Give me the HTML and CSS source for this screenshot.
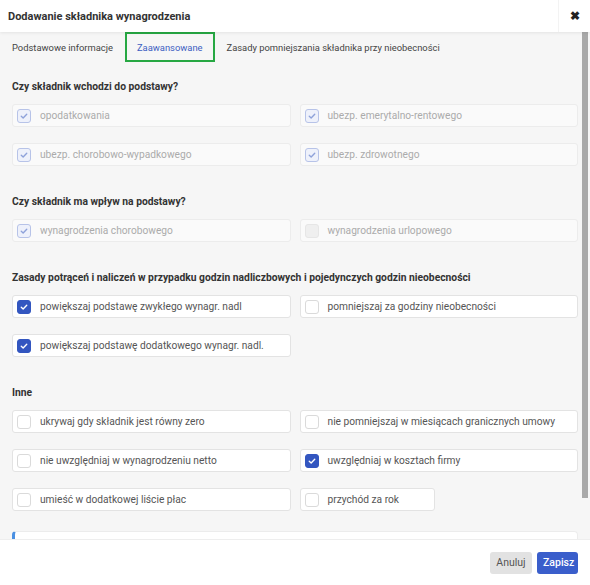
FILE: index.html
```html
<!DOCTYPE html>
<html lang="pl">
<head>
<meta charset="utf-8">
<title>Dodawanie składnika wynagrodzenia</title>
<link rel="stylesheet" href="styles.css">
</head>
<body>
<div class="dialog">
  <header class="dlg-header">
    <h1 class="dlg-title">Dodawanie składnika wynagrodzenia</h1>
    <button class="dlg-close" aria-label="Zamknij">&#10006;</button>
  </header>

  <div class="dlg-viewport">
  <main class="dlg-body">
    <nav class="tabs">
      <span class="tab">Podstawowe informacje</span>
      <span class="tab tab-active">Zaawansowane</span>
      <span class="tab">Zasady pomniejszania składnika przy nieobecności</span>
    </nav>

    <section class="section">
      <h2 class="section-title">Czy składnik wchodzi do podstawy?</h2>
      <div class="grid">
        <label class="opt opt-disabled"><span class="cb cb-dis-on"><svg viewBox="0 0 14 14"><path d="M3.8 7.3 L6 9.3 L10.2 4.9"/></svg></span><span class="opt-text">opodatkowania</span></label>
        <label class="opt opt-disabled"><span class="cb cb-dis-on"><svg viewBox="0 0 14 14"><path d="M3.8 7.3 L6 9.3 L10.2 4.9"/></svg></span><span class="opt-text">ubezp. emerytalno-rentowego</span></label>
        <label class="opt opt-disabled"><span class="cb cb-dis-on"><svg viewBox="0 0 14 14"><path d="M3.8 7.3 L6 9.3 L10.2 4.9"/></svg></span><span class="opt-text">ubezp. chorobowo-wypadkowego</span></label>
        <label class="opt opt-disabled"><span class="cb cb-dis-on"><svg viewBox="0 0 14 14"><path d="M3.8 7.3 L6 9.3 L10.2 4.9"/></svg></span><span class="opt-text">ubezp. zdrowotnego</span></label>
      </div>
    </section>

    <section class="section">
      <h2 class="section-title">Czy składnik ma wpływ na podstawy?</h2>
      <div class="grid">
        <label class="opt opt-disabled"><span class="cb cb-dis-on"><svg viewBox="0 0 14 14"><path d="M3.8 7.3 L6 9.3 L10.2 4.9"/></svg></span><span class="opt-text">wynagrodzenia chorobowego</span></label>
        <label class="opt opt-disabled"><span class="cb cb-dis-off"></span><span class="opt-text">wynagrodzenia urlopowego</span></label>
      </div>
    </section>

    <section class="section">
      <h2 class="section-title">Zasady potrąceń i naliczeń w przypadku godzin nadliczbowych i pojedynczych godzin nieobecności</h2>
      <div class="grid">
        <label class="opt"><span class="cb cb-on"><svg viewBox="0 0 14 14"><path d="M3.8 7.3 L6 9.3 L10.2 4.9"/></svg></span><span class="opt-text">powiększaj podstawę zwykłego wynagr. nadl</span></label>
        <label class="opt"><span class="cb"></span><span class="opt-text">pomniejszaj za godziny nieobecności</span></label>
        <label class="opt"><span class="cb cb-on"><svg viewBox="0 0 14 14"><path d="M3.8 7.3 L6 9.3 L10.2 4.9"/></svg></span><span class="opt-text">powiększaj podstawę dodatkowego wynagr. nadl.</span></label>
      </div>
    </section>

    <section class="section">
      <h2 class="section-title">Inne</h2>
      <div class="grid">
        <label class="opt"><span class="cb"></span><span class="opt-text">ukrywaj gdy składnik jest równy zero</span></label>
        <label class="opt"><span class="cb"></span><span class="opt-text">nie pomniejszaj w miesiącach granicznych umowy</span></label>
        <label class="opt"><span class="cb"></span><span class="opt-text">nie uwzględniaj w wynagrodzeniu netto</span></label>
        <label class="opt"><span class="cb cb-on"><svg viewBox="0 0 14 14"><path d="M3.8 7.3 L6 9.3 L10.2 4.9"/></svg></span><span class="opt-text">uwzględniaj w kosztach firmy</span></label>
        <label class="opt"><span class="cb"></span><span class="opt-text">umieść w dodatkowej liście płac</span></label>
        <label class="opt opt-narrow"><span class="cb"></span><span class="opt-text">przychód za rok</span></label>
      </div>
    </section>

    <div class="panel"></div>
  </main>
  <div class="scroll-thumb"></div>
  </div>

  <footer class="dlg-footer">
    <button class="btn btn-cancel">Anuluj</button>
    <button class="btn btn-save">Zapisz</button>
  </footer>
</div>
</body>
</html>
```

FILE: styles.css
```css
* { box-sizing: border-box; }

html, body {
  margin: 0;
  padding: 0;
  height: 100%;
}

body {
  font-family: Roboto, "Liberation Sans", Arial, sans-serif;
  color: #333;
  background: #fff;
}

.dialog {
  display: flex;
  flex-direction: column;
  height: 585px;
  width: 590px;
}

.dlg-header {
  height: 32px;
  flex: 0 0 32px;
  display: flex;
  align-items: center;
  background: #fff;
  box-shadow: 0 1px 3px rgba(0, 0, 0, 0.08);
  position: relative;
  z-index: 1;
}

.dlg-title {
  flex: 1;
  margin: 0;
  padding-left: 8px;
  font-size: 11px;
  font-weight: 700;
  color: #333;
}

.dlg-close {
  width: 32px;
  height: 32px;
  border: 0;
  border-left: 1px solid #f3f3f3;
  background: #fff;
  font-size: 12px;
  font-weight: 700;
  color: #222;
  padding: 0;
  cursor: pointer;
}

.dlg-viewport {
  flex: 1 1 auto;
  position: relative;
  overflow: hidden;
  background: #f6f6f6;
}

.dlg-body {
  height: 100%;
  overflow: hidden;
  padding: 0 12px 12px 12px;
}

.scroll-thumb {
  position: absolute;
  top: 0;
  right: 2px;
  width: 6px;
  height: 466px;
  background: #a9a9a9;
}

.tabs {
  display: flex;
  height: 30px;
  margin-left: -12px;
}

.tab {
  display: flex;
  align-items: center;
  padding: 0 12px;
  font-size: 9.4px;
  color: #444;
}

.tab-active {
  color: #3d5ec2;
  outline: 2px solid #27a843;
  outline-offset: -2px;
}

.section {
  margin-top: 17px;
}
.section + .section {
  margin-top: 28px;
}

.section-title {
  margin: 0 0 9px;
  font-size: 10.3px;
  line-height: 16px;
  font-weight: 700;
  color: #333;
}

.grid {
  display: grid;
  grid-template-columns: 1fr 1fr;
  column-gap: 9px;
  row-gap: 16px;
}

.opt {
  display: flex;
  align-items: center;
  height: 23px;
  padding-left: 4px;
  background: #fff;
  border: 1px solid #e3e3e3;
  border-radius: 3px;
}

.opt-disabled {
  background: #fafafa;
  border-color: #ececec;
}

.opt-narrow {
  width: 135px;
}

.opt-text {
  margin-left: 9px;
  font-size: 10.2px;
  color: #555;
  white-space: nowrap;
}

.opt-disabled .opt-text {
  color: #ababab;
}

.cb {
  flex: 0 0 14px;
  width: 14px;
  height: 14px;
  border: 1px solid #dadada;
  border-radius: 3px;
  background: #fff;
  display: flex;
  align-items: center;
  justify-content: center;
}

.cb svg {
  width: 14px;
  height: 14px;
  fill: none;
  stroke-width: 1.6;
  stroke-linecap: round;
  stroke-linejoin: round;
}

.cb-on {
  background: #3356c0;
  border-color: #3356c0;
}
.cb-on svg { stroke: #fff; }

.cb-dis-on {
  background: #eef1fb;
  border-color: #b7c3e8;
}
.cb-dis-on svg { stroke: #8ea2da; }

.cb-dis-off {
  background: #efefef;
  border-color: #e6e6e6;
}

.panel {
  margin-top: 20px;
  height: 38px;
  background: #fff;
  border: 1px solid #ececec;
  border-left: 3px solid #4a90e2;
  border-radius: 4px;
}

.dlg-footer {
  flex: 0 0 46px;
  height: 46px;
  display: flex;
  align-items: center;
  justify-content: flex-end;
  gap: 5px;
  padding-right: 12px;
  background: #fff;
  border-top: 1px solid #eee;
  position: relative;
  z-index: 1;
}

.btn {
  height: 22px;
  border: 0;
  border-radius: 3px;
  padding: 0 6px;
  font-family: Roboto, "Liberation Sans", Arial, sans-serif;
  font-size: 10.5px;
  cursor: pointer;
}

.btn-cancel {
  width: 42px;
  background: #e2e2e2;
  color: #555;
}

.btn-save {
  width: 41px;
  background: #3a5ecb;
  color: #fff;
  font-weight: 500;
}
```
